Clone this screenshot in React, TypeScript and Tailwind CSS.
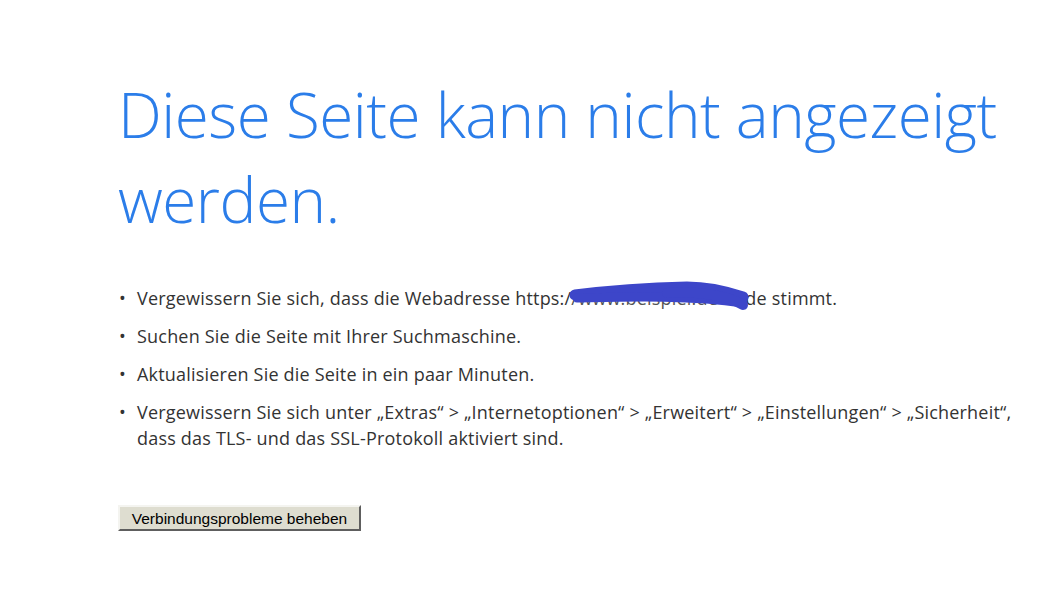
export default function App() {
  const font = { fontFamily: '"Open Sans", "Segoe UI", sans-serif' };
  return (
    <div className="w-[1061px] h-[604px] bg-white overflow-hidden">
      <div className="pl-[118px] pt-[72px]">
        <h1
          className="text-[62px] leading-[85px] font-light text-[#2b7de9] tracking-[-0.5px]"
          style={font}
        >
          Diese Seite kann nicht angezeigt
          <br />
          werden.
        </h1>

        <ul
          className="mt-[43px] flex flex-col gap-[12px] text-[18px] leading-[26px] text-[#333] tracking-[0.2px]"
          style={font}
        >
          <li className="flex">
            <span className="w-[19px] pl-[1px] text-[18px]">•</span>
            <span>
              Vergewissern Sie sich, dass die Webadresse https:/
              <span className="relative inline-block w-[174px] overflow-visible whitespace-nowrap align-top">
                <span className="text-[#555]">/www.beispiel.de</span>
                <svg
                  className="absolute left-[-4px] top-[-6px]"
                  width="190"
                  height="40"
                  viewBox="0 0 190 40"
                >
                  <path
                    d="M8 16 C40 12, 80 9, 120 8 C140 8, 155 11, 176 18"
                    stroke="#3d46c9"
                    strokeWidth="11"
                    strokeLinecap="round"
                    fill="none"
                  />
                  <path
                    d="M10 19 C60 18, 120 16, 176 24"
                    stroke="#3d46c9"
                    strokeWidth="9"
                    strokeLinecap="round"
                    fill="none"
                  />
                  <path
                    d="M100 14 C130 12, 160 16, 176 26"
                    stroke="#3d46c9"
                    strokeWidth="10"
                    strokeLinecap="round"
                    fill="none"
                  />
                </svg>
              </span>
              de stimmt.
            </span>
          </li>
          <li className="flex">
            <span className="w-[19px] pl-[1px] text-[18px]">•</span>
            <span>Suchen Sie die Seite mit Ihrer Suchmaschine.</span>
          </li>
          <li className="flex">
            <span className="w-[19px] pl-[1px] text-[18px]">•</span>
            <span>Aktualisieren Sie die Seite in ein paar Minuten.</span>
          </li>
          <li className="flex">
            <span className="w-[19px] pl-[1px] text-[18px]">•</span>
            <span className="w-[900px]">
              Vergewissern Sie sich unter „Extras“ &gt; „Internetoptionen“ &gt; „Erweitert“ &gt; „Einstellungen“ &gt; „Sicherheit“,
              <br />
              dass das TLS- und das SSL-Protokoll aktiviert sind.
            </span>
          </li>
        </ul>

        <button
          className="mt-[54px] h-[26px] w-[243px] bg-[#deddd0] border-2 border-t-[#f4f4f0] border-l-[#f4f4f0] border-r-[#5e5e5e] border-b-[#5e5e5e] text-[15.5px] text-black"
          style={{ fontFamily: '"Liberation Sans", Arial, sans-serif' }}
        >
          Verbindungsprobleme beheben
        </button>
      </div>
    </div>
  );
}
